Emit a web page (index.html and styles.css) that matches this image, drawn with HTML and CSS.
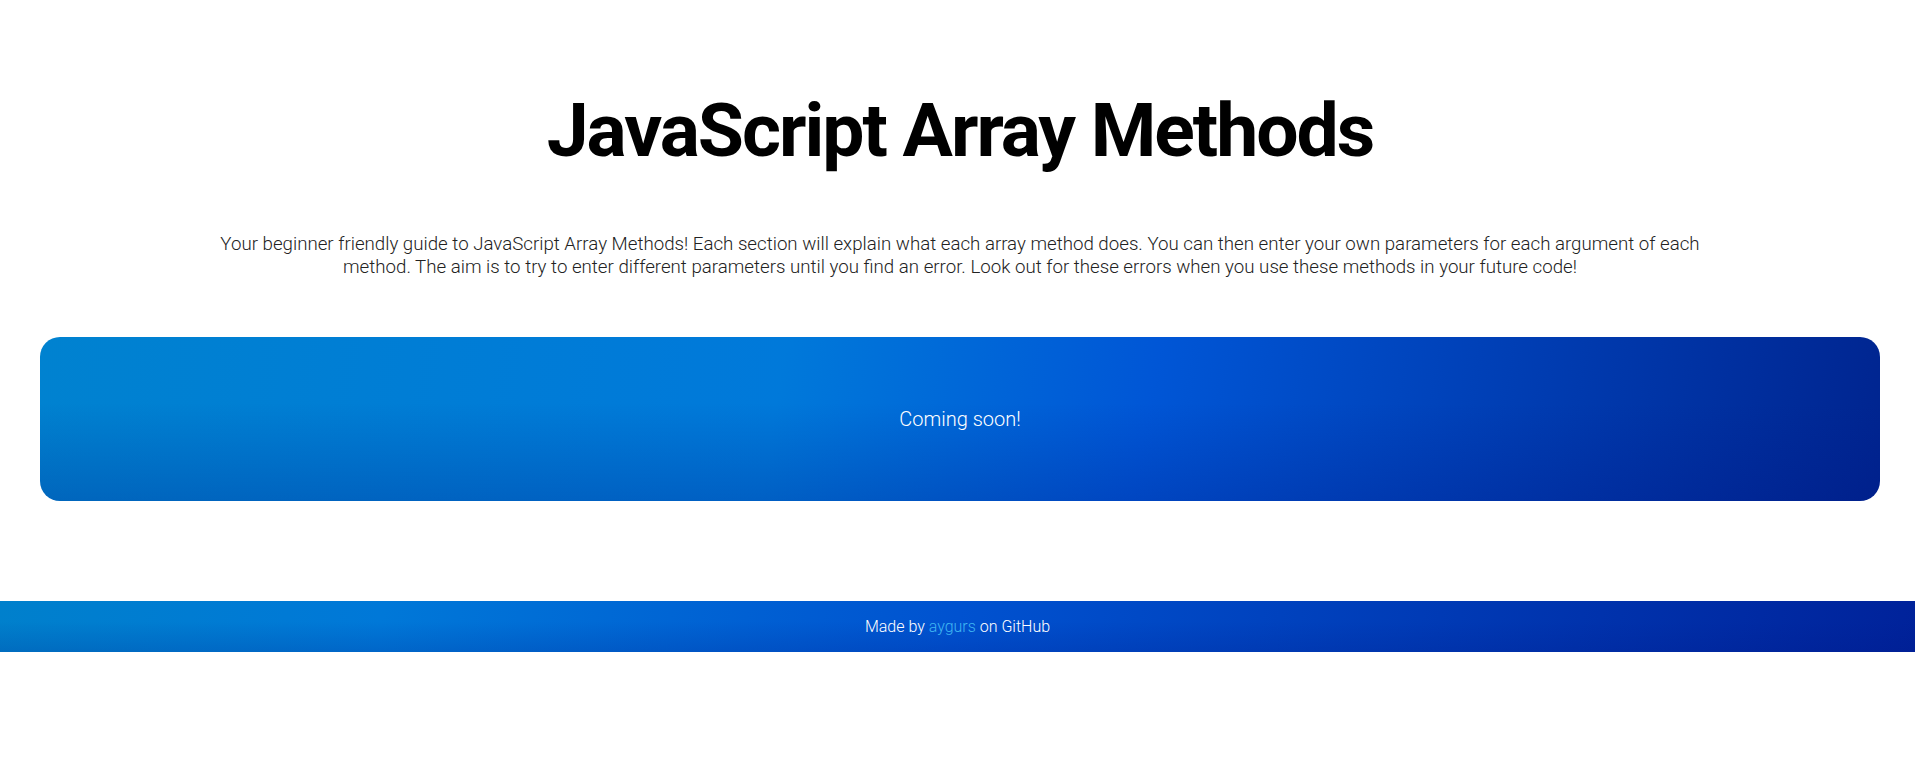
FILE: index.html
```html
<!DOCTYPE html>
<html lang="en">
<head>
<meta charset="utf-8">
<title>JavaScript Array Methods</title>
<link rel="stylesheet" href="styles.css">
</head>
<body>
<main class="main">
  <h1 class="title">JavaScript Array Methods</h1>
  <p class="intro">Your beginner friendly guide to JavaScript Array Methods! Each section will explain what each array method does. You can then enter your own parameters for each argument of each method. The aim is to try to enter different parameters until you find an error. Look out for these errors when you use these methods in your future code!</p>
  <section class="card">
    <p class="card-text">Coming soon!</p>
  </section>
</main>
<footer class="footer">
  <p class="footer-text">Made by <a class="footer-link" href="#">aygurs</a> on GitHub</p>
</footer>
</body>
</html>
```
FILE: styles.css
```css
* { box-sizing: border-box; }
html, body { margin: 0; padding: 0; background: #fff; }
body { font-family: Roboto, "Liberation Sans", sans-serif; color: #222; }
.main {
  padding: 93px 35px 100px 40px;
  display: flex;
  flex-direction: column;
  align-items: center;
}
.title {
  margin: 0;
  font-size: 75px;
  font-weight: 700;
  line-height: 1;
  color: #000;
  letter-spacing: -2px;
}
.intro {
  margin: 65px 0 0;
  max-width: 1500px;
  text-align: center;
  font-size: 18.7px;
  font-weight: 300;
  line-height: 23px;
  color: #222;
}
.card {
  margin-top: 58px;
  width: 100%;
  height: 164px;
  border-radius: 20px;
  display: flex;
  align-items: center;
  justify-content: center;
  background:
    linear-gradient(to bottom, rgba(0,20,120,0) 40%, rgba(0,20,130,0.25) 100%),
    linear-gradient(100deg, #0082d0 0%, #0079da 40%, #0056d6 60%, #00248f 100%);
}
.card-text {
  margin: 0;
  color: #fff;
  font-size: 20px;
  font-weight: 300;
}
.footer {
  height: 51px;
  display: flex;
  align-items: center;
  justify-content: center;
  background:
    linear-gradient(to bottom, rgba(0,20,120,0) 40%, rgba(0,20,130,0.18) 100%),
    linear-gradient(100deg, #0080cc 0%, #0078d8 20%, #0052d0 50%, #00229a 100%);
}
.footer-text {
  margin: 0;
  color: #fff;
  font-size: 16px;
  font-weight: 300;
}
.footer-link {
  color: #3fb6f2;
  text-decoration: none;
}
```
